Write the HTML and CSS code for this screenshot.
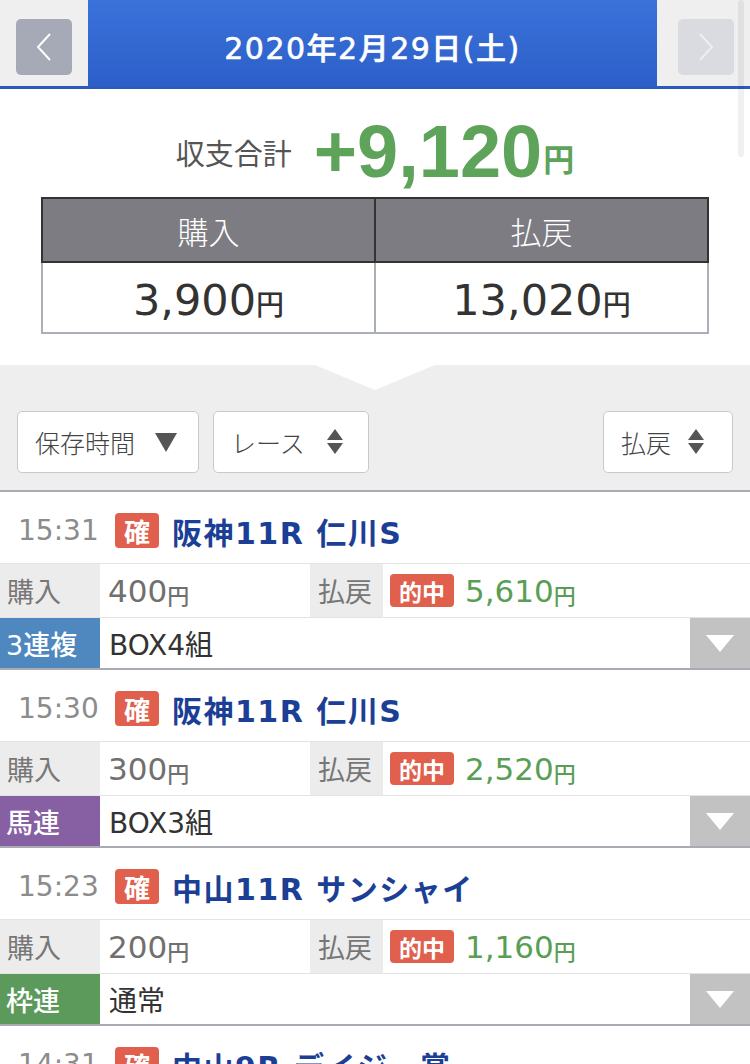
FILE: index.html
```html
<!DOCTYPE html>
<html lang="ja">
<head>
    <meta charset="UTF-8">
    <meta name="viewport" content="width=device-width, initial-scale=1.0">
    <title>収支</title>
    <link rel="stylesheet" href="styles.css">
</head>
<body>
    <div id="header">
        <div class="side">
            <a class="nav-btn prev">
                <svg width="16" height="28" viewBox="0 0 16 28"><polyline points="14,1 2,14 14,27" fill="none" stroke="#fff" stroke-width="2"/></svg>
            </a>
        </div>
        <div class="date-tab">2020年2月29日(土)</div>
        <div class="side right">
            <a class="nav-btn next">
                <svg width="16" height="28" viewBox="0 0 16 28"><polyline points="2,1 14,14 2,27" fill="none" stroke="#eceef2" stroke-width="2"/></svg>
            </a>
        </div>
    </div>
    <div class="scrollbar"></div>

    <div id="summary">
        <div class="total">
            <span class="total-label">収支合計</span>
            <span class="total-num">+9,120<small>円</small></span>
        </div>
        <table class="sum-table">
            <tr>
                <th>購入</th>
                <th>払戻</th>
            </tr>
            <tr>
                <td>3,900<small>円</small></td>
                <td>13,020<small>円</small></td>
            </tr>
        </table>
    </div>

    <div id="sortbar">
        <div class="notch"></div>
        <div class="sort-btns">
            <div class="sort-btn w-time">保存時間
                <svg width="22" height="19" viewBox="0 0 22 19"><polygon points="0,0 22,0 11,19" fill="#555"/></svg>
            </div>
            <div class="sort-btn w-race">レース
                <svg width="16" height="26" viewBox="0 0 16 26"><polygon points="8,0 16,11 0,11" fill="#555"/><polygon points="0,14 16,14 8,25" fill="#555"/></svg>
            </div>
            <div class="sort-btn w-pay">払戻
                <svg width="16" height="26" viewBox="0 0 16 26"><polygon points="8,0 16,11 0,11" fill="#555"/><polygon points="0,14 16,14 8,25" fill="#555"/></svg>
            </div>
        </div>
    </div>

    <div id="list">
        <div class="item">
            <div class="item-title">
                <span class="time">15:31</span>
                <span class="kaku">確</span>
                <span class="race">阪神11R 仁川S</span>
            </div>
            <div class="item-info">
                <div class="lbl buy-lbl">購入</div>
                <div class="val buy-val">400<small>円</small></div>
                <div class="lbl">払戻</div>
                <div class="val pay-val"><span class="hit">的中</span>5,610<small>円</small></div>
            </div>
            <div class="item-type">
                <div class="type t-blue">3連複</div>
                <div class="type-text">BOX4組</div>
                <div class="drop"><svg width="28" height="17" viewBox="0 0 28 17"><polygon points="0,0 28,0 14,17" fill="#fff"/></svg></div>
            </div>
        </div>
        <div class="item">
            <div class="item-title">
                <span class="time">15:30</span>
                <span class="kaku">確</span>
                <span class="race">阪神11R 仁川S</span>
            </div>
            <div class="item-info">
                <div class="lbl buy-lbl">購入</div>
                <div class="val buy-val">300<small>円</small></div>
                <div class="lbl">払戻</div>
                <div class="val pay-val"><span class="hit">的中</span>2,520<small>円</small></div>
            </div>
            <div class="item-type">
                <div class="type t-purple">馬連</div>
                <div class="type-text">BOX3組</div>
                <div class="drop"><svg width="28" height="17" viewBox="0 0 28 17"><polygon points="0,0 28,0 14,17" fill="#fff"/></svg></div>
            </div>
        </div>
        <div class="item">
            <div class="item-title">
                <span class="time">15:23</span>
                <span class="kaku">確</span>
                <span class="race">中山11R サンシャイ</span>
            </div>
            <div class="item-info">
                <div class="lbl buy-lbl">購入</div>
                <div class="val buy-val">200<small>円</small></div>
                <div class="lbl">払戻</div>
                <div class="val pay-val"><span class="hit">的中</span>1,160<small>円</small></div>
            </div>
            <div class="item-type">
                <div class="type t-green">枠連</div>
                <div class="type-text">通常</div>
                <div class="drop"><svg width="28" height="17" viewBox="0 0 28 17"><polygon points="0,0 28,0 14,17" fill="#fff"/></svg></div>
            </div>
        </div>
        <div class="item">
            <div class="item-title">
                <span class="time">14:31</span>
                <span class="kaku">確</span>
                <span class="race">中山9R デイジー賞</span>
            </div>
        </div>
    </div>
</body>
</html>
```

FILE: styles.css
```css
* {
    margin: 0;
    padding: 0;
    box-sizing: border-box;
}

body {
    width: 750px;
    background: #fff;
    font-family: "DejaVu Sans", "Noto Sans CJK JP", sans-serif;
    color: #333;
    overflow: hidden;
}

small {
    font-family: "Noto Sans CJK JP", sans-serif;
}

#header {
    display: flex;
    height: 89px;
    background: #efefef;
    border-bottom: 3px solid #2c5bbf;
}

.side {
    width: 88px;
    display: flex;
    align-items: center;
    padding: 8px 0 0 16px;
}

.side.right {
    width: 93px;
    padding-left: 21px;
}

.nav-btn {
    width: 56px;
    height: 56px;
    border-radius: 5px;
    background: #a6aab6;
    display: flex;
    align-items: center;
    justify-content: center;
}

.nav-btn.next {
    background: #d9dbe1;
}

.date-tab {
    flex: 1;
    display: flex;
    align-items: center;
    justify-content: center;
    background: linear-gradient(#3a72da, #2d5fc9);
    color: #fff;
    font-size: 30px;
    font-weight: 500;
    letter-spacing: 1.5px;
    -webkit-text-stroke: 0.6px #fff;
    padding-top: 6px;
}

.scrollbar {
    position: absolute;
    top: 0;
    left: 738px;
    width: 6px;
    height: 157px;
    border-radius: 3px;
    background: rgba(0, 0, 0, .06);
}

#summary {
    padding: 26px 41px 31px;
}

.total {
    display: flex;
    justify-content: center;
    align-items: center;
    gap: 22px;
    height: 82px;
    padding-bottom: 8px;
}

.total-label {
    font-size: 29px;
    line-height: 1;
    color: #555;
    font-family: "Noto Sans CJK JP", sans-serif;
}

.total-num {
    font-family: "Liberation Sans", sans-serif;
    font-size: 74px;
    line-height: 1;
    font-weight: 700;
    color: #5da35a;
}

.total-num small {
    font-size: 31px;
    vertical-align: 6px;
    margin-left: 1px;
}

.sum-table {
    width: 668px;
    border-collapse: collapse;
    table-layout: fixed;
}

.sum-table th {
    height: 64px;
    background: #7c7c82;
    border: 2px solid #333;
    color: #fff;
    font-size: 31px;
    font-weight: 300;
    font-family: "Noto Sans CJK JP", sans-serif;
}

.sum-table td {
    height: 71px;
    border: 2px solid #aaaeb5;
    border-top: none;
    text-align: center;
    font-size: 43px;
    color: #333;
    padding-top: 4px;
}

.sum-table td small {
    font-size: 28px;
    font-weight: 500;
}

#sortbar {
    background: #eeeeee;
    padding-bottom: 17px;
}

.notch {
    width: 120px;
    height: 25px;
    margin: 0 auto;
    background: #fff;
    clip-path: polygon(0 0, 100% 0, 50% 100%);
}

.sort-btns {
    display: flex;
    gap: 14px;
    padding: 21px 17px 0;
}

.sort-btn {
    height: 62px;
    background: #fff;
    border: 1px solid #c9c9c9;
    border-radius: 5px;
    display: flex;
    align-items: center;
    gap: 20px;
    padding-left: 17px;
    font-size: 25px;
    color: #444;
    font-family: "Noto Sans CJK JP", sans-serif;
    font-weight: 300;
}

.w-time {
    width: 182px;
}

.w-race {
    width: 156px;
    gap: 22px;
}

.w-pay {
    width: 130px;
    gap: 17px;
    margin-left: auto;
}

#list {
    border-top: 2px solid #a8abb2;
}

.item {
    border-bottom: 2px solid #a8abb2;
}

.item-title {
    height: 71px;
    display: flex;
    align-items: center;
    padding: 6px 0 0 18px;
}

.time {
    font-size: 28px;
    color: #8c8c8c;
    width: 97px;
}

.kaku {
    width: 44px;
    height: 35px;
    border-radius: 4px;
    background: #e0604d;
    color: #fff;
    font-size: 26px;
    font-weight: 700;
    font-family: "Noto Sans CJK JP", sans-serif;
    display: flex;
    align-items: center;
    justify-content: center;
    margin-right: 13px;
}

.race {
    font-size: 30px;
    font-weight: 700;
    color: #1c3f96;
    letter-spacing: 1.5px;
}

.item-info {
    display: flex;
    height: 55px;
    border-top: 1px solid #e3e3e3;
    border-bottom: 1px solid #e3e3e3;
}

.lbl {
    width: 73px;
    background: #ececec;
    color: #777;
    font-size: 27px;
    font-family: "Noto Sans CJK JP", sans-serif;
    display: flex;
    align-items: center;
    padding-left: 8px;
}

.lbl.buy-lbl {
    width: 100px;
    padding-left: 7px;
}

.val {
    display: flex;
    align-items: center;
    font-size: 31px;
    padding-left: 8px;
}

.val small {
    font-size: 22px;
    font-weight: 500;
    margin-top: 7px;
}

.buy-val {
    width: 210px;
    color: #707070;
}

.pay-val {
    flex: 1;
    color: #5a9e55;
    padding-left: 7px;
}

.hit {
    width: 64px;
    height: 33px;
    border-radius: 4px;
    background: #e0604d;
    color: #fff;
    font-size: 23px;
    font-weight: 700;
    font-family: "Noto Sans CJK JP", sans-serif;
    display: flex;
    align-items: center;
    justify-content: center;
    margin-right: 11px;
}

.item-type {
    display: flex;
    height: 50px;
}

.type {
    width: 100px;
    color: #fff;
    font-size: 27px;
    font-weight: 500;
    display: flex;
    align-items: center;
    padding-left: 6px;
}

.t-blue {
    background: #4e88bf;
}

.t-purple {
    background: #8660a2;
}

.t-green {
    background: #5c9a5c;
}

.type-text {
    flex: 1;
    display: flex;
    align-items: center;
    padding-left: 9px;
    font-size: 28px;
    color: #333;
}

.drop {
    width: 60px;
    background: #c2c2c2;
    display: flex;
    align-items: center;
    justify-content: center;
}
```
